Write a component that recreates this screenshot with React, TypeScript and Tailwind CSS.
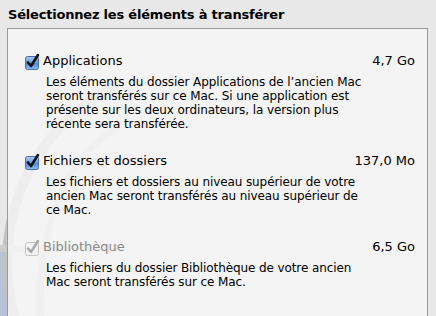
// Migration Assistant: "select items to transfer" pane
const font = { fontFamily: '"DejaVu Sans", "Liberation Sans", sans-serif' }

type Item = {
  label: string
  size: string
  lines: string[]
  disabled?: boolean
}

const items: Item[] = [
  {
    label: 'Applications',
    size: '4,7 Go',
    lines: [
      'Les éléments du dossier Applications de l’ancien Mac',
      'seront transférés sur ce Mac. Si une application est',
      'présente sur les deux ordinateurs, la version plus',
      'récente sera transférée.',
    ],
  },
  {
    label: 'Fichiers et dossiers',
    size: '137,0 Mo',
    lines: [
      'Les fichiers et dossiers au niveau supérieur de votre',
      'ancien Mac seront transférés au niveau supérieur de',
      'ce Mac.',
    ],
  },
  {
    label: 'Bibliothèque',
    size: '6,5 Go',
    disabled: true,
    lines: [
      'Les fichiers du dossier Bibliothèque de votre ancien',
      'Mac seront transférés sur ce Mac.',
    ],
  },
]

function AquaCheck({ disabled }: { disabled?: boolean }) {
  if (disabled) {
    return (
      <svg width="17" height="17" viewBox="0 0 17 17" className="shrink-0">
        <rect x="1.5" y="3.5" width="13" height="13" rx="2" fill="#f2f2f2" stroke="#c4c4c4" />
        <path d="M4 9.5 L7 13 L14 2" fill="none" stroke="#a8a8a8" strokeWidth="2.4" strokeLinecap="round" strokeLinejoin="round" />
      </svg>
    )
  }
  return (
    <svg width="17" height="17" viewBox="0 0 17 17" className="shrink-0">
      <defs>
        <linearGradient id="aq" x1="0" y1="0" x2="0" y2="1">
          <stop offset="0" stopColor="#a9c8f0" />
          <stop offset="0.5" stopColor="#6b9fe4" />
          <stop offset="0.55" stopColor="#4c88dc" />
          <stop offset="1" stopColor="#8fc0f4" />
        </linearGradient>
      </defs>
      <rect x="1.5" y="3.5" width="13" height="13" rx="2" fill="url(#aq)" stroke="#4a6ea8" />
      <path d="M4 9.5 L7 13 L14 2" fill="none" stroke="#111" strokeWidth="2.6" strokeLinecap="round" strokeLinejoin="round" />
    </svg>
  )
}

function Watermark() {
  return (
    <svg
      width="130"
      height="316"
      viewBox="0 0 130 316"
      className="absolute left-0 top-0 pointer-events-none"
    >
      <defs>
        <linearGradient id="fade" x1="0" y1="0" x2="1" y2="0">
          <stop offset="0" stopColor="#fff" stopOpacity="1" />
          <stop offset="0.85" stopColor="#fff" stopOpacity="1" />
          <stop offset="1" stopColor="#fff" stopOpacity="0" />
        </linearGradient>
        <mask id="m">
          <rect x="0" y="0" width="130" height="316" fill="url(#fade)" />
        </mask>
      </defs>
      <g mask="url(#m)">
        <rect x="0" y="250" width="8" height="66" fill="#b6c2d8" />
        <circle cx="205" cy="262" r="198" fill="none" stroke="#c2c2c2" strokeWidth="10" />
        <ellipse cx="150" cy="300" rx="110" ry="180" fill="none" stroke="#d0d0d0" strokeWidth="7" />
        <rect x="0" y="245" width="120" height="7" fill="#cccccc" />
      </g>
    </svg>
  )
}

export default function App() {
  return (
    <div className="relative w-[436px] h-[316px] overflow-hidden bg-[#e8e8e8] text-black" style={font}>
      <Watermark />
      <div className="relative flex flex-col h-full">
        <h1 className="pl-[8px] pt-[7px] h-[28px] text-[13px] font-bold leading-[16px] tracking-[-0.2px]">
          Sélectionnez les éléments à transférer
        </h1>
        <div className="ml-[7px] mr-[8px] flex-1 border border-[#9a9a9a] border-b-0 bg-[#f6f6f6]/85 pl-[16px] pr-[12px] pt-[22px]">
          <div className="flex flex-col gap-[20px]">
            {items.map((it) => (
              <div key={it.label} className="flex flex-col">
                <div className="flex items-center h-[20px]">
                  <AquaCheck disabled={it.disabled} />
                  <span
                    className={
                      'ml-[2px] text-[13px] leading-[20px] ' +
                      (it.disabled ? 'text-[#8a8a8a]' : 'text-black')
                    }
                  >
                    {it.label}
                  </span>
                  <span className="ml-auto text-[13px] leading-[20px]">{it.size}</span>
                </div>
                <div className="mt-[4px] pl-[22px] text-[12px] leading-[14px] tracking-[-0.1px]">
                  {it.lines.map((l) => (
                    <div key={l} className="whitespace-nowrap">{l}</div>
                  ))}
                </div>
              </div>
            ))}
          </div>
        </div>
      </div>
    </div>
  )
}
